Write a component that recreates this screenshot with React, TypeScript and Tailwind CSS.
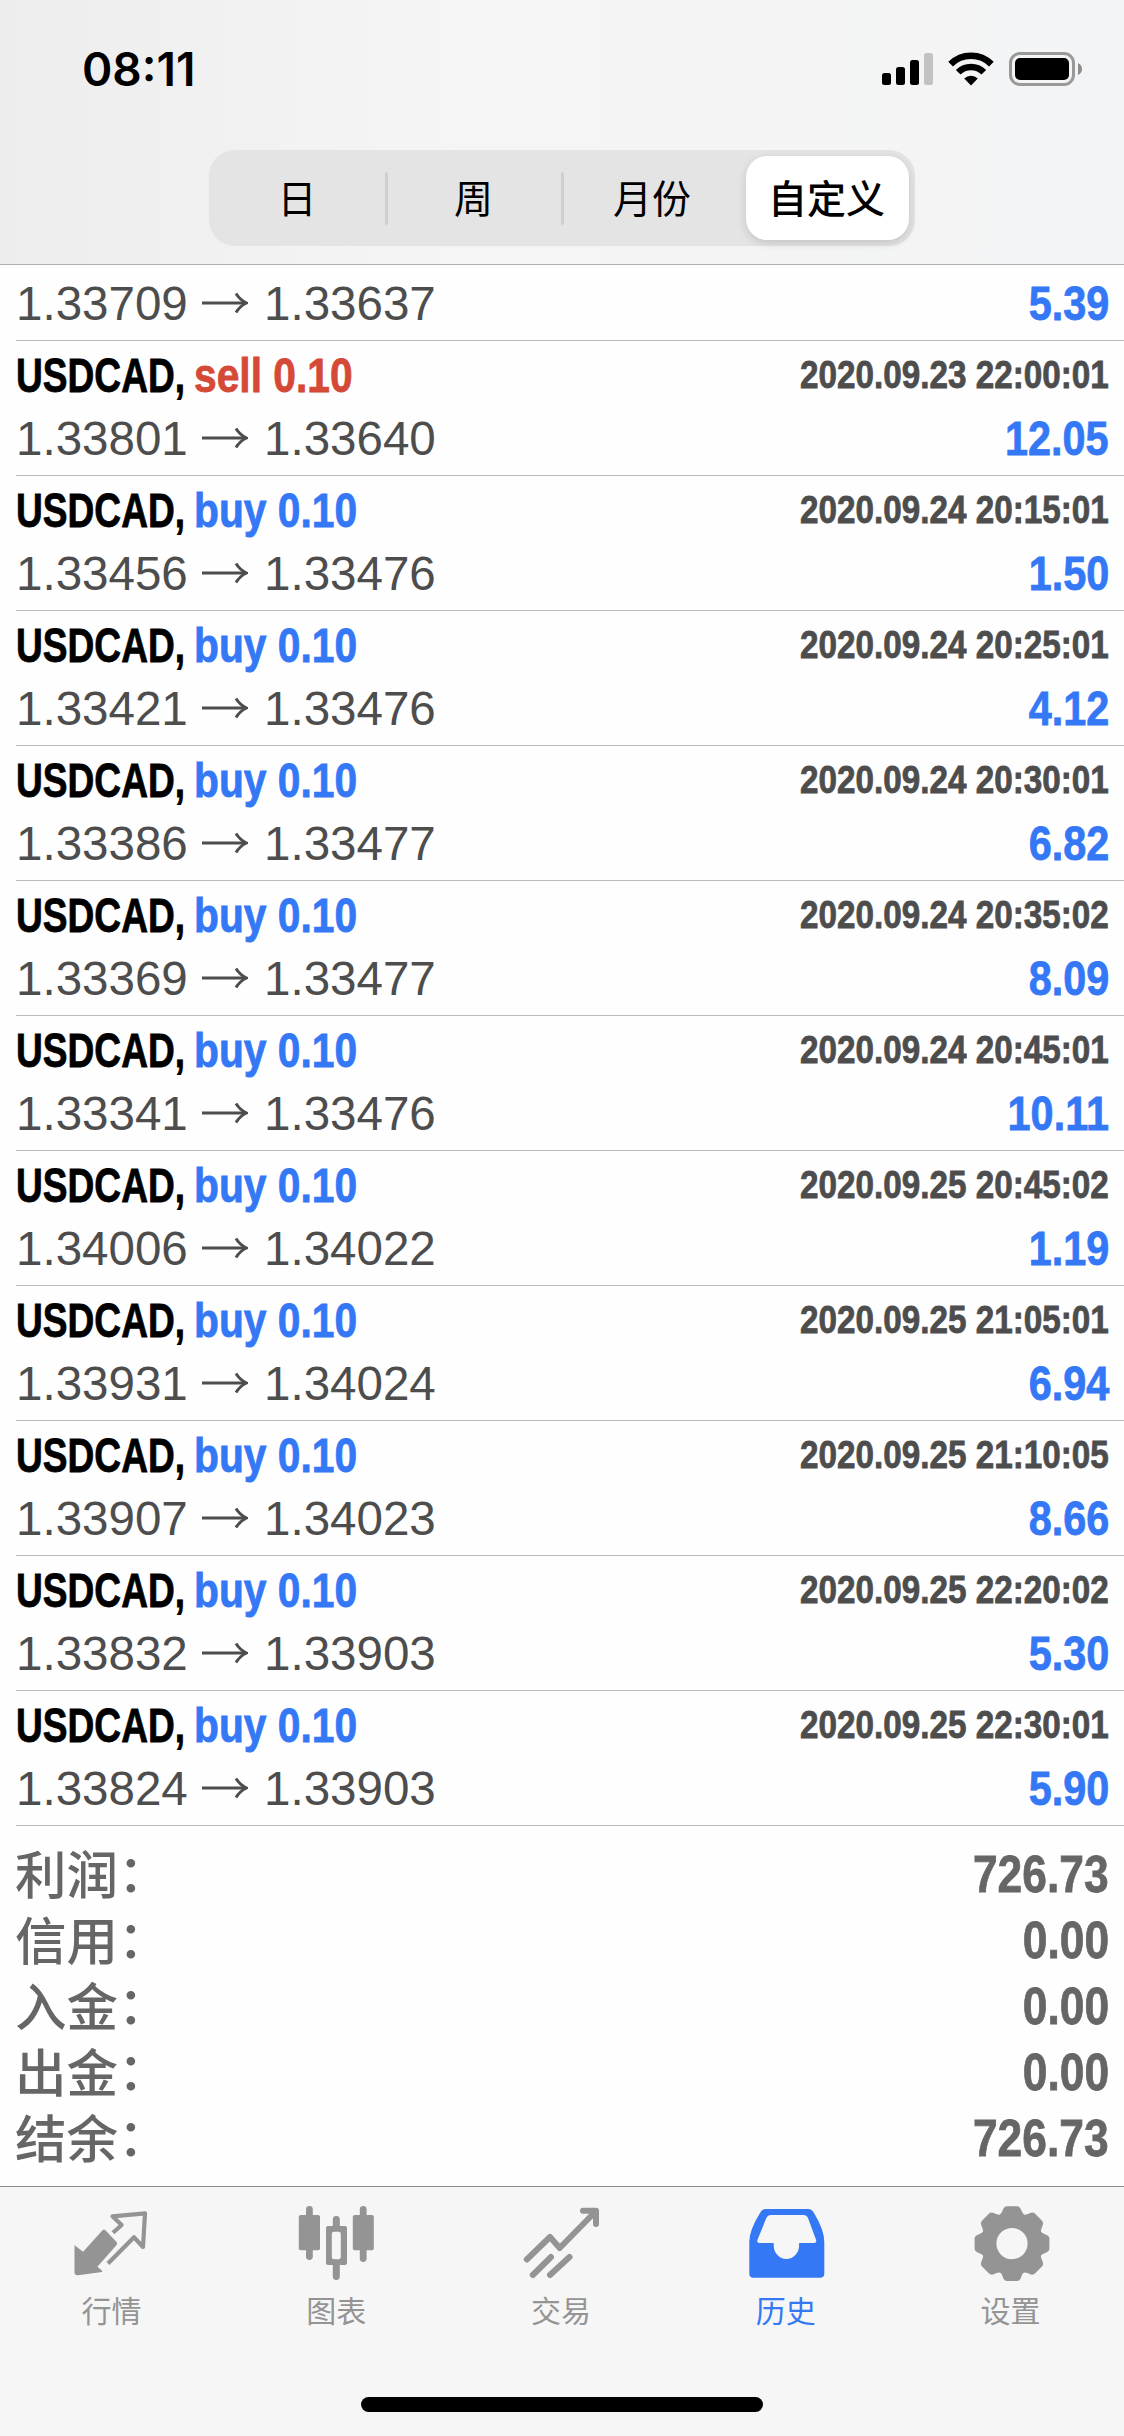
import type { ReactNode } from 'react'
import clsx from 'clsx'

interface Deal {
  side: 'buy' | 'sell'
  open: string
  close: string
  time: string
  profit: string
}

const deals: Deal[] = [
  { side: 'sell', open: '1.33801', close: '1.33640', time: '2020.09.23 22:00:01', profit: '12.05' },
  { side: 'buy', open: '1.33456', close: '1.33476', time: '2020.09.24 20:15:01', profit: '1.50' },
  { side: 'buy', open: '1.33421', close: '1.33476', time: '2020.09.24 20:25:01', profit: '4.12' },
  { side: 'buy', open: '1.33386', close: '1.33477', time: '2020.09.24 20:30:01', profit: '6.82' },
  { side: 'buy', open: '1.33369', close: '1.33477', time: '2020.09.24 20:35:02', profit: '8.09' },
  { side: 'buy', open: '1.33341', close: '1.33476', time: '2020.09.24 20:45:01', profit: '10.11' },
  { side: 'buy', open: '1.34006', close: '1.34022', time: '2020.09.25 20:45:02', profit: '1.19' },
  { side: 'buy', open: '1.33931', close: '1.34024', time: '2020.09.25 21:05:01', profit: '6.94' },
  { side: 'buy', open: '1.33907', close: '1.34023', time: '2020.09.25 21:10:05', profit: '8.66' },
  { side: 'buy', open: '1.33832', close: '1.33903', time: '2020.09.25 22:20:02', profit: '5.30' },
  { side: 'buy', open: '1.33824', close: '1.33903', time: '2020.09.25 22:30:01', profit: '5.90' },
]

const summary = [
  { label: '利润', value: '726.73' },
  { label: '信用', value: '0.00' },
  { label: '入金', value: '0.00' },
  { label: '出金', value: '0.00' },
  { label: '结余', value: '726.73' },
]

const cjk = 'font-["Noto_Sans_CJK_SC",sans-serif]'

// extra weight for the condensed bold runs
const heavy = 'font-bold [-webkit-text-stroke:0.8px_currentColor]'

// ── Status bar ────────────────────────────────────────────────

function StatusBar() {
  return (
    <div className="flex h-[138px] items-center justify-between pr-[41px] pl-[82px]">
      <span className='font-["Inter",sans-serif] text-[46px] leading-[54px] font-semibold'>08:11</span>
      <div className="flex items-center">
        <svg width="51" height="34" viewBox="0 0 51 34">
          <rect x="0" y="21" width="9" height="12" rx="2.5" />
          <rect x="14" y="15" width="9" height="18" rx="2.5" />
          <rect x="28" y="8" width="9" height="25" rx="2.5" />
          <rect x="42" y="1" width="9" height="32" rx="2.5" fill="#c2c2c2" />
        </svg>
        <svg className="ml-[15px]" width="46" height="34" viewBox="0 0 46 34">
          <g fill="none" stroke="#000" strokeWidth="6.6">
            <path d="M2.6 12.2A29 29 0 0 1 43.4 12.2" />
            <path d="M10.2 20.3A18 18 0 0 1 35.8 20.3" />
          </g>
          <path d="M23 33.4L16.2 26.6A9.6 9.6 0 0 1 29.8 26.6Z" />
        </svg>
        <svg className="ml-[15px]" width="74" height="34" viewBox="0 0 74 34">
          <rect x="1.5" y="1.5" width="63" height="31" rx="9.5" fill="none" stroke="#999" strokeWidth="3" />
          <rect x="6" y="6" width="54" height="22" rx="5" />
          <path d="M69 11Q73 13 73 17Q73 21 69 23Z" fill="#8c8c8c" />
        </svg>
      </div>
    </div>
  )
}

// ── Period switch ─────────────────────────────────────────────

function PeriodSwitch() {
  return (
    <div className={clsx('mx-auto mt-3 flex h-24 w-[706px] items-center rounded-[26px] bg-[#e4e4e4] p-1.5 text-[39px] leading-[81px]', cjk)}>
      <div className="w-[170px] pr-1.5 pb-[3px] text-center">日</div>
      <div className="h-[53px] w-[3px] rounded-full bg-[#cfcfcf]" />
      <div className="w-[173px] pr-0.5 pb-[3px] text-center">周</div>
      <div className="h-[53px] w-[3px] rounded-full bg-[#cfcfcf]" />
      <div className="flex-1 pr-1.5 pb-[3px] text-center">月份</div>
      <div className="h-[84px] w-[163px] rounded-[21px] bg-white pr-0.5 text-center font-medium shadow-[0_3px_10px_rgba(0,0,0,0.14)]">
        自定义
      </div>
    </div>
  )
}

// ── History list ──────────────────────────────────────────────

function PriceLine({ open, close, profit }: Pick<Deal, 'open' | 'close' | 'profit'>) {
  return (
    <div className="flex h-[58px] items-center text-[48px] leading-[56px] text-[#4d4d4d]">
      <span className="w-[186px] origin-left scale-x-[0.99]">{open}</span>
      <svg className="mt-[-3px] mr-4" width="46" height="22" viewBox="0 0 46 22" fill="none" stroke="#4d4d4d" strokeWidth="3">
        <path d="M0 11H44" />
        <path d="M34 1.5Q38 8 44.5 11Q38 14 34 20.5" />
      </svg>
      <span className="flex-1 origin-left scale-x-[0.99]">{close}</span>
      <span className={clsx('origin-right scale-x-[0.845] pb-0.5 text-[49px] text-[#3478f6]', heavy)}>{profit}</span>
    </div>
  )
}

function DealRow({ deal }: { deal: Deal }) {
  return (
    <div className="ml-4 h-[135px] border-b border-[#bcbcbc] pr-[15px]">
      <div className={clsx('flex h-[69px] items-start text-[48.5px] leading-[69px]', heavy)}>
        <span className="w-[178px] origin-left scale-x-[0.765] whitespace-nowrap">USDCAD,</span>
        <span
          className={clsx(
            'flex-1 origin-left scale-x-[0.84] whitespace-nowrap',
            deal.side === 'sell' ? 'text-[#d54937]' : 'text-[#3478f6]',
          )}
        >
          {deal.side} 0.10
        </span>
        <span className="origin-right scale-x-[0.842] text-[39.5px] leading-[66px] text-[#4d4d4d]">{deal.time}</span>
      </div>
      <PriceLine open={deal.open} close={deal.close} profit={deal.profit} />
    </div>
  )
}

function Summary() {
  return (
    <div className="h-[360px] pt-[15px] pr-[15px] pl-[15px] text-[#666]">
      {summary.map(row => (
        <div key={row.label} className="flex h-[66px] items-start justify-between">
          <span className={clsx('flex text-[51.5px] leading-[61px] font-medium', cjk)}>
            {row.label}
            <span className="leading-[57px]">：</span>
          </span>
          <span className={clsx('origin-right scale-x-[0.845] text-[52.5px] leading-[66px]', heavy)}>{row.value}</span>
        </div>
      ))}
    </div>
  )
}

// ── Tab bar ───────────────────────────────────────────────────

function QuotesIcon() {
  return (
    <>
      <path
        d="M2.5 43.3L11.1 49.7L30.5 28.3Q31.9 26.6 33.4 28.3L44.6 40Q45.6 41.5 44.6 43L25.4 64.7L30.1 68.7V70L6 73.2Q2.5 73.4 2.5 70Z"
        fill="currentColor"
      />
      <path
        d="M41 30.7L49.6 23L40.5 14.3L73 11.3L71 45L62 35.3L36 61.5"
        fill="none"
        stroke="currentColor"
        strokeWidth="4.2"
        strokeLinejoin="round"
      />
    </>
  )
}

function ChartIcon() {
  return (
    <g fill="currentColor">
      <rect x="9" y="4" width="6.8" height="54" rx="3.4" />
      <rect x="1.8" y="13" width="21.2" height="35.3" rx="2" />
      <rect x="62.8" y="4" width="6.8" height="56" rx="3.4" />
      <rect x="55.8" y="13" width="21" height="35.3" rx="2" />
      <rect x="35.8" y="14" width="7" height="15" rx="3.4" />
      <rect x="35.8" y="58" width="7" height="20" rx="3.4" />
      <path
        fillRule="evenodd"
        d="M31 24H48Q50 24 50 26V61Q50 63 48 63H31Q29 63 29 61V26Q29 24 31 24ZM37 29.7Q34.8 29.7 34.8 32V55Q34.8 57.2 37 57.2H41.6Q43.8 57.2 43.8 55V32Q43.8 29.7 41.6 29.7Z"
      />
    </g>
  )
}

function TradeIcon() {
  return (
    <g fill="none" stroke="currentColor" strokeWidth="6" strokeLinecap="round" strokeLinejoin="round">
      <path d="M4.8 57.5L28 35L37.7 46L73.5 9.5" />
      <path d="M61 8.7H74V22" />
      <path d="M10.8 73L29 55" />
      <path d="M28 73L47.5 55" />
    </g>
  )
}

function HistoryIcon() {
  return (
    <path
      fill="currentColor"
      fillRule="evenodd"
      d="M19 7H61Q65 7 67 11Q77.3 28 77.3 40V71.5Q77.3 75.8 73 75.8H6.5Q2.3 75.8 2.3 71.5V40Q2.3 28 13 11Q15 7 19 7ZM24 13Q20.8 13 19.3 16L10.4 38Q9.5 41 12.5 41H26.7V43.5A12.7 13.5 0 0 0 52.1 43.5V41H67Q70 41 69.1 38L61 16Q59.6 13 56.5 13Z"
    />
  )
}

const gearAngles = [0, 45, 90, 135, 180, 225, 270, 315]

function SettingsIcon() {
  return (
    <g transform="translate(40 41.6)">
      <circle r="23" fill="none" stroke="currentColor" strokeWidth="14.8" />
      {gearAngles.map(a => (
        <path
          key={a}
          d="M-13 -28Q-10.6 -29.4 -9.2 -33.5Q-8 -37.4 -5 -37.4H5Q8 -37.4 9.2 -33.5Q10.6 -29.4 13 -28L8 -24H-8Z"
          fill="currentColor"
          transform={`rotate(${a})`}
        />
      ))}
    </g>
  )
}

const tabs: { label: string; icon: ReactNode; active?: boolean }[] = [
  { label: '行情', icon: <QuotesIcon /> },
  { label: '图表', icon: <ChartIcon /> },
  { label: '交易', icon: <TradeIcon /> },
  { label: '历史', icon: <HistoryIcon />, active: true },
  { label: '设置', icon: <SettingsIcon /> },
]

function TabBar() {
  return (
    <div className="h-[250px] border-t border-[#8a8a8a] bg-[#f6f6f6] pt-[15px]">
      <div className="grid grid-cols-5">
        {tabs.map(tab => (
          <div
            key={tab.label}
            className={clsx('flex flex-col items-center', tab.active ? 'text-[#3478f6]' : 'text-[#949494]')}
          >
            <svg width="80" height="80" viewBox="0 0 80 80">{tab.icon}</svg>
            <span className={clsx('mt-[5px] mb-[3px] pr-0.5 text-[30px] leading-[44px]', cjk)}>{tab.label}</span>
          </div>
        ))}
      </div>
      <div className="mx-auto mt-[63px] h-[15px] w-[402px] rounded-full bg-black" />
    </div>
  )
}

export default function App() {
  return (
    <div className='h-[2436px] w-[1124px] overflow-hidden bg-[#fefefe] font-["Liberation_Sans",Arial,sans-serif] text-black'>
      <header className="h-[265px] border-b border-[#b0b0b0] bg-linear-to-r from-[#ededed] via-[#f5f5f5] via-40% to-[#f3f4f5]">
        <StatusBar />
        <PeriodSwitch />
      </header>
      <div className="ml-4 h-[76px] border-b border-[#bcbcbc] pt-2.5 pr-[15px]">
        <PriceLine open="1.33709" close="1.33637" profit="5.39" />
      </div>
      {deals.map(deal => (
        <DealRow key={deal.time} deal={deal} />
      ))}
      <Summary />
      <TabBar />
    </div>
  )
}
